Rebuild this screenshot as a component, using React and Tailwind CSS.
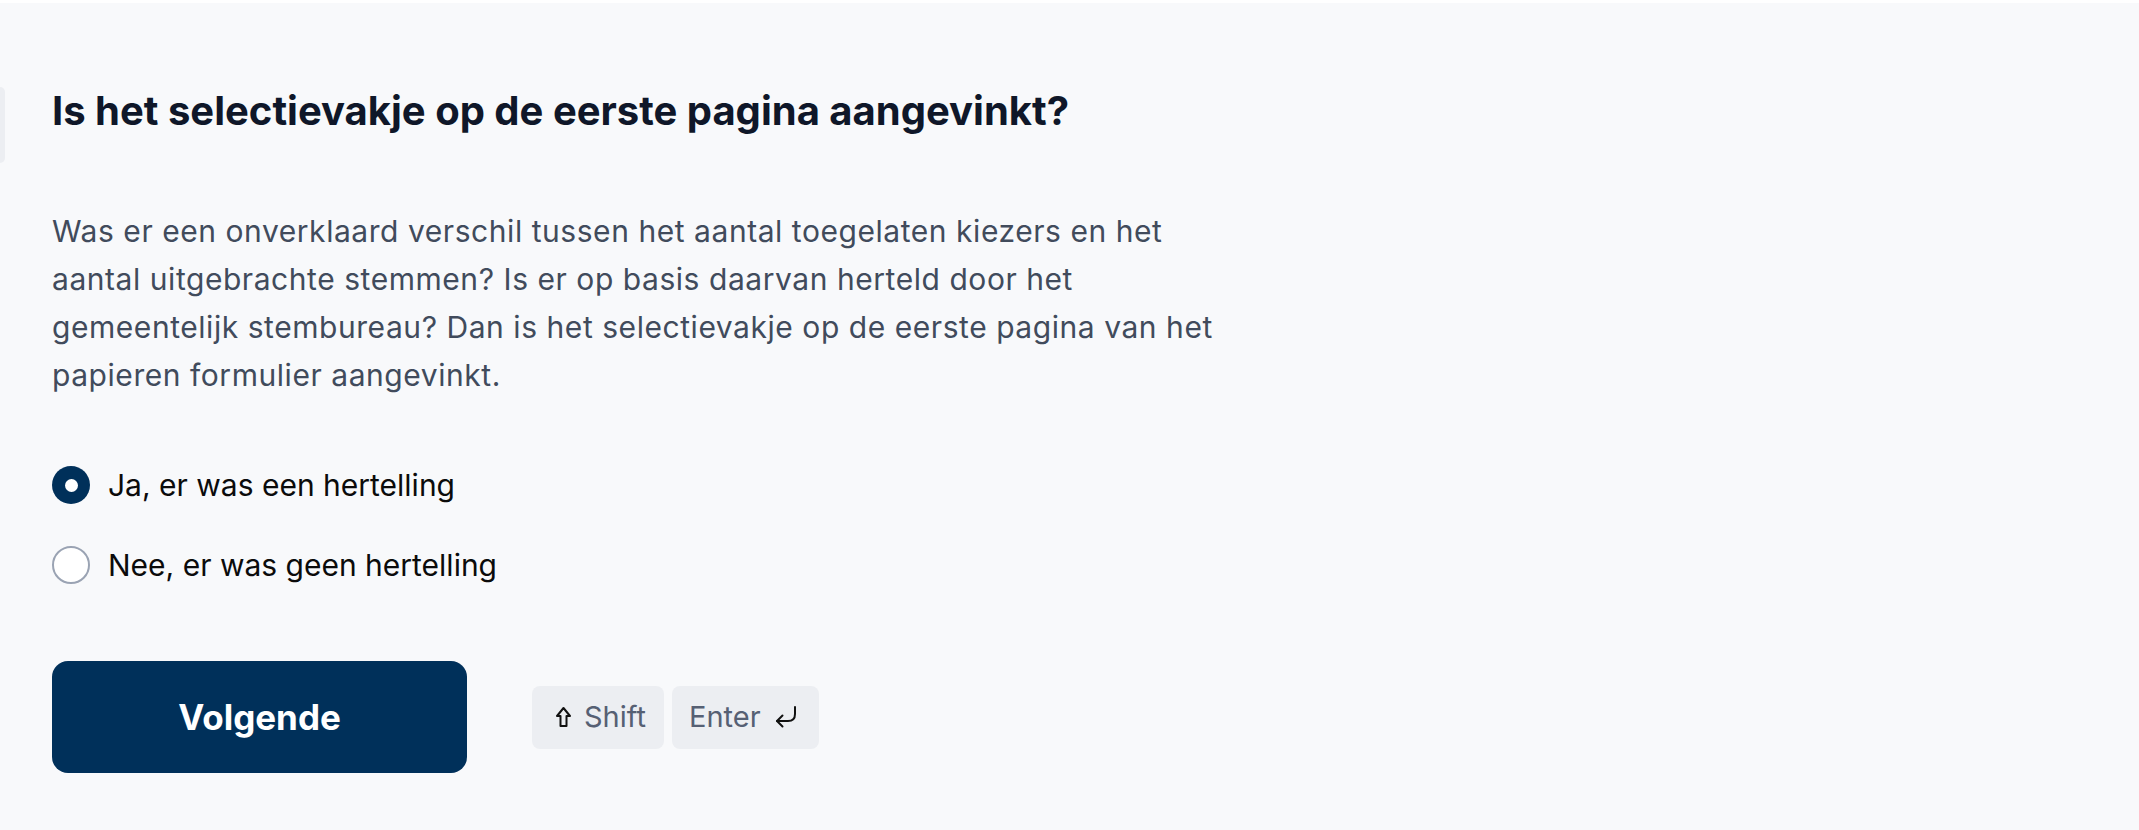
import { useState } from 'react';

const options = [
  { id: 'yes', label: 'Ja, er was een hertelling' },
  { id: 'no', label: 'Nee, er was geen hertelling' },
];

function ShiftIcon() {
  return (
    <svg width="17" height="22" viewBox="0 0 17 22" fill="none" stroke="#111" strokeWidth="2" strokeLinejoin="round">
      <path d="M8.5 2 L15 10 H11.5 V20 H5.5 V10 H2 Z" />
    </svg>
  );
}

function EnterIcon() {
  return (
    <svg width="24" height="24" viewBox="0 0 24 24" fill="none" stroke="#111" strokeWidth="2" strokeLinecap="round" strokeLinejoin="round">
      <path d="M21 2 V9 Q21 16 14 16 H3" />
      <path d="M8.5 10.5 L3 16 L8.5 21.5" />
    </svg>
  );
}

function Radio({ checked, label, onSelect }) {
  return (
    <label className="flex items-center gap-[18px] cursor-pointer" onClick={onSelect}>
      {checked ? (
        <span className="flex h-[38px] w-[38px] items-center justify-center rounded-full bg-[#00305a]">
          <span className="h-[13px] w-[13px] rounded-full bg-white" />
        </span>
      ) : (
        <span className="h-[38px] w-[38px] rounded-full border-2 border-[#9aa3b3] bg-white" />
      )}
      <span className="text-[30px] leading-[38px] text-[#0b0b0b]">{label}</span>
    </label>
  );
}

export default function App() {
  const [value, setValue] = useState('yes');

  return (
    <div className="min-h-[830px] bg-[#f8f9fb] border-t-[3px] border-white flex" style={{ fontFamily: 'Inter, "Noto Sans", sans-serif' }}>
      {/* edge of the panel to the left */}
      <div className="w-[5px] shrink-0 pt-[84px]">
        <div className="h-[76px] rounded-r-[12px] bg-[#eceef2]" />
      </div>

      <div className="pl-[47px] pt-[84px]">
        <h2 className="text-[40px] leading-[48px] font-bold text-[#0f1729]">
          Is het selectievakje op de eerste pagina aangevinkt?
        </h2>

        <p className="mt-[72px] text-[30px] leading-[48px] tracking-[0.55px] text-[#414b5c] whitespace-nowrap">
          Was er een onverklaard verschil tussen het aantal toegelaten kiezers en het
          <br />
          aantal uitgebrachte stemmen? Is er op basis daarvan herteld door het
          <br />
          gemeentelijk stembureau? Dan is het selectievakje op de eerste pagina van het
          <br />
          papieren formulier aangevinkt.
        </p>

        <div className="mt-[67px] flex flex-col gap-[42px]">
          {options.map((o) => (
            <Radio key={o.id} label={o.label} checked={value === o.id} onSelect={() => setValue(o.id)} />
          ))}
        </div>

        <div className="mt-[77px] flex items-center gap-[65px]">
          <button className="h-[112px] w-[415px] rounded-[16px] bg-[#00305a] text-[35px] font-bold text-white">
            Volgende
          </button>
          <div className="flex gap-[8px]">
            <span className="flex h-[63px] items-center gap-[12px] rounded-[8px] bg-[#eceef2] pl-[23px] pr-[18px] text-[29px] text-[#566074]">
              <ShiftIcon />
              Shift
            </span>
            <span className="flex h-[63px] items-center gap-[13px] rounded-[8px] bg-[#eceef2] pl-[17px] pr-[21px] text-[29px] text-[#566074]">
              Enter
              <EnterIcon />
            </span>
          </div>
        </div>
      </div>
    </div>
  );
}
